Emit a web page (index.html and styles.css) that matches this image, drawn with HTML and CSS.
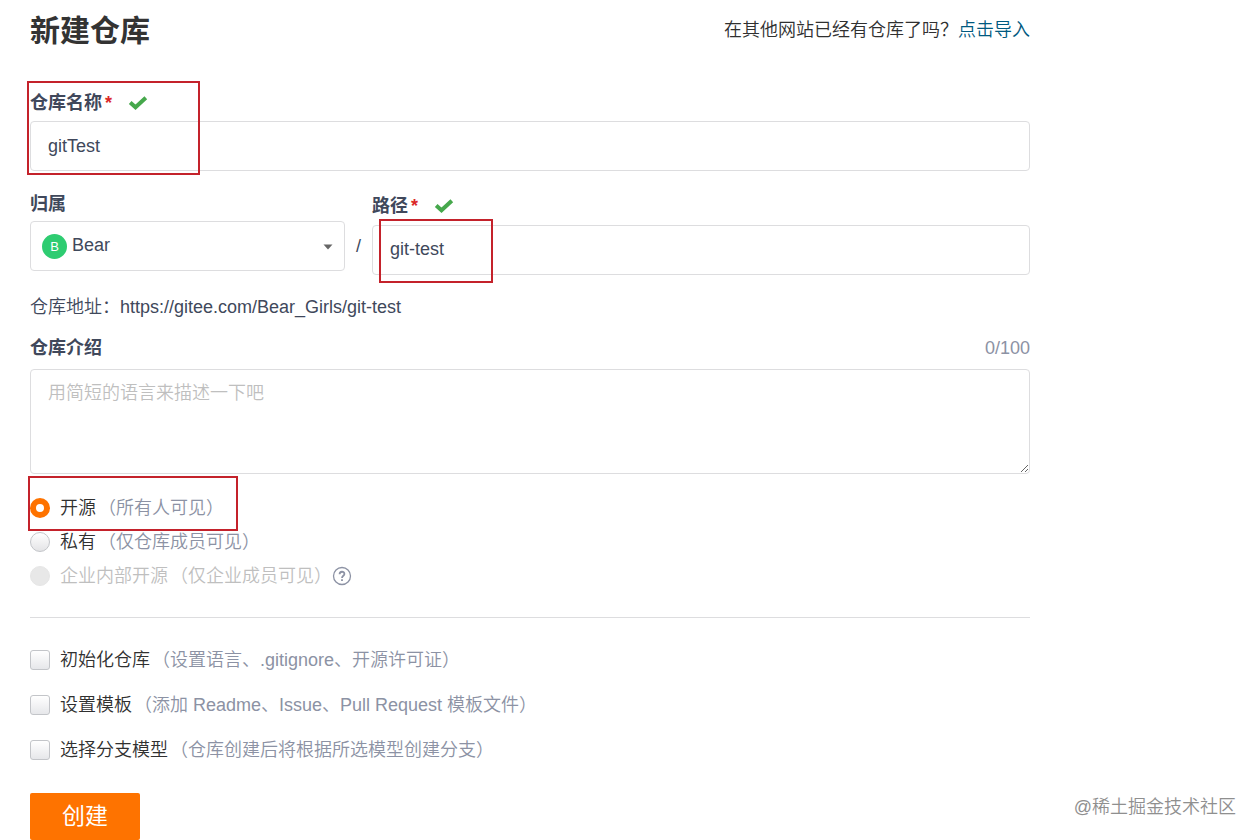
FILE: index.html
```
<!DOCTYPE html>
<html lang="zh-CN">
<head>
    <meta charset="UTF-8">
    <meta name="viewport" content="width=device-width, initial-scale=1.0">
    <title>新建仓库</title>
    <link rel="stylesheet" href="styles.css">
</head>
<body>
    <form class="container">
        <div class="header">
            <h1>新建仓库</h1>
            <p class="import">在其他网站已经有仓库了吗？<a href="#">点击导入</a></p>
        </div>

        <div class="form-group">
            <div class="label-row">
                <label for="name">仓库名称</label><span class="required">*</span>
                <svg class="check" viewBox="0 0 20 16"><path d="M2.2 7.5 L7.5 12.3 L17.8 2.8"/></svg>
            </div>
            <input class="text" type="text" id="name" value="gitTest">
            <span class="mark mark-name"></span>
        </div>

        <div class="path-row">
            <div class="owner">
                <div class="label-row"><label for="owner">归属</label></div>
                <div class="select-wrap">
                    <span class="avatar">B</span>
                    <select id="owner">
                        <option>Bear</option>
                    </select>
                    <svg class="caret" viewBox="0 0 10 6"><path d="M0.5 0.5 H9.5 L5 5.5 Z"/></svg>
                </div>
            </div>
            <span class="slash">/</span>
            <div class="path">
                <div class="label-row">
                    <label for="path">路径</label><span class="required">*</span>
                    <svg class="check" viewBox="0 0 20 16"><path d="M2.2 7.5 L7.5 12.3 L17.8 2.8"/></svg>
                </div>
                <input class="text" type="text" id="path" value="git-test">
                <span class="mark mark-path"></span>
            </div>
        </div>

        <p class="address">仓库地址：https://gitee.com/Bear_Girls/git-test</p>

        <div class="intro-row">
            <label for="intro">仓库介绍</label>
            <span class="count">0/100</span>
        </div>
        <textarea id="intro" placeholder="用简短的语言来描述一下吧"></textarea>

        <div class="radios">
            <div class="option">
                <input type="radio" name="visible" id="public" checked>
                <label for="public">开源<span class="hint">（所有人可见）</span></label>
            </div>
            <div class="option">
                <input type="radio" name="visible" id="private">
                <label for="private">私有<span class="hint">（仅仓库成员可见）</span></label>
            </div>
            <div class="option disabled">
                <input type="radio" name="visible" id="inner" disabled>
                <label for="inner">企业内部开源<span class="hint">（仅企业成员可见）</span></label>
                <svg class="help" viewBox="0 0 20 20">
                    <circle cx="10" cy="10" r="8.5"/>
                    <path class="bold" d="M7.6 8.2 C7.6 5 12.4 5 12.4 7.9 C12.4 9.7 10 9.8 10 12"/>
                    <path class="bold" d="M10 13.2 V15"/>
                </svg>
            </div>
            <span class="mark mark-public"></span>
        </div>

        <hr>

        <div class="checks">
            <div class="option">
                <input type="checkbox" id="init">
                <label for="init">初始化仓库<span class="hint">（设置语言、.gitignore、开源许可证）</span></label>
            </div>
            <div class="option">
                <input type="checkbox" id="template">
                <label for="template">设置模板<span class="hint">（添加 Readme、Issue、Pull Request 模板文件）</span></label>
            </div>
            <div class="option">
                <input type="checkbox" id="branch">
                <label for="branch">选择分支模型<span class="hint">（仓库创建后将根据所选模型创建分支）</span></label>
            </div>
        </div>

        <button type="submit">创建</button>
    </form>
    <div class="watermark">@稀土掘金技术社区</div>
</body>
</html>
```
FILE: styles.css
```
* { box-sizing: border-box; }
body { position: relative; margin: 0; background: #fff; color: #40485b; font: 350 18px/24px "Liberation Sans", "Noto Sans CJK SC", sans-serif; }
input, select, textarea, button { margin: 0; font: inherit; color: inherit; }
.container { max-width: 1060px; padding: 11px 30px 0; }

.header { display: flex; justify-content: space-between; height: 79px; }
h1 { margin: 0; font-size: 30px; line-height: 40px; color: #333; }
.import { margin: 0; line-height: 38px; color: #303030; }
.import a { color: #005980; text-decoration: none; }

.form-group, .path, .radios { position: relative; }
.label-row { display: flex; align-items: center; height: 31px; padding-bottom: 6px; }
.label-row label, .intro-row label { font-weight: bold; }
.required { margin-left: 3px; font-weight: bold; color: #db2828; }
.check { width: 20px; height: 16px; margin-left: 16px; fill: none; stroke: #46a84c; stroke-width: 4; }

.text, select, textarea { display: block; width: 100%; border: 1px solid #dddddf; border-radius: 4px; background: #fff; outline: none; }
.text { height: 50px; padding: 0 17px; }

.path-row { display: flex; margin-top: 20px; }
.owner { width: 315px; }
.owner .label-row { height: 30px; padding-bottom: 4px; }
.slash { width: 27px; padding-top: 43px; text-align: center; }
.path { flex: 1; }
.path .label-row { height: 34px; padding-bottom: 4px; }
.path .text { padding-bottom: 2px; }
.select-wrap { position: relative; }
select { height: 50px; padding: 0 30px 2px 41px; appearance: none; }
.avatar { position: absolute; left: 12px; top: 13px; width: 25px; height: 25px; border-radius: 50%; background: #2ecc71; color: #fff; font-size: 13px; line-height: 25px; text-align: center; }
.caret { position: absolute; right: 12px; top: 23px; width: 10px; height: 6px; fill: #666; }

.address { margin: 20px 0 0; }
.intro-row { display: flex; justify-content: space-between; margin: 17px 0 9px; }
.count { color: #8c92a4; }
textarea { height: 105px; padding: 11px 17px; resize: vertical; }
textarea::placeholder { color: #bfbfbf; }

.radios { padding-top: 17px; }
.option { display: flex; align-items: center; height: 34px; color: #303030; }
.option label { margin-left: 10px; }
.hint { margin-left: 2px; color: #8c92a4; }
.option input { appearance: none; width: 20px; height: 20px; border: 1px solid #c3c5c9; background: linear-gradient(#f3f4f5, #fff); }
input[type="radio"] { border-radius: 50%; background: linear-gradient(#fff, #e4e4e6); }
input[type="radio"]:checked { border: 6px solid #fe7300; background: #fff; }
input[type="radio"]:disabled { border-color: #e6e6e6; background: #e8e8e8; }
input[type="checkbox"] { border-radius: 3px; background: linear-gradient(#fff, #e6e7ea); }
.disabled, .disabled .hint { color: #bfbfbf; }
.help { width: 20px; height: 20px; fill: none; stroke: #8c92a4; stroke-width: 1.3; }
.help .bold { stroke-width: 1.8; }

hr { margin: 24px 0 19px; border: 0; border-top: 1px solid #dddddf; }
.checks .option { height: 45px; }
button { display: block; width: 110px; height: 47px; margin-top: 21px; padding: 0; border: 0; border-radius: 2px; background: #fe7300; color: #fff; font-size: 23px; font-weight: 400; line-height: 47px; }

/* red highlight frames */
.mark { position: absolute; border: 2px solid #c4222b; pointer-events: none; }
.mark-name { left: -3px; top: -9px; width: 173px; height: 94px; }
.mark-path { left: 7px; top: 28px; width: 114px; height: 64px; }
.mark-public { left: -2px; top: 2px; width: 210px; height: 55px; }

.watermark { position: absolute; right: 23px; bottom: 21px; color: #8f8f8f; }
```
